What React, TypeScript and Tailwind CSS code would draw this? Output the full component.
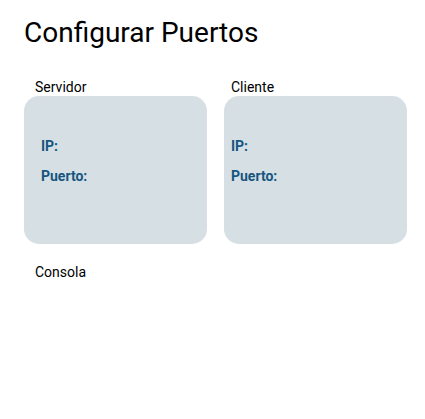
import React from "react";

function Card({ label, labelOffset, innerOffset }: { label: string; labelOffset: string; innerOffset: string }) {
  return (
    <div className="flex w-[183px] flex-col">
      <div className={`h-[19px] text-[14px] leading-[20px] text-black ${labelOffset}`}>{label}</div>
      <div className={`h-[148px] rounded-[15px] bg-[#d6dfe4] pt-[40px] ${innerOffset}`}>
        <div className="text-[14px] font-bold leading-[20px] text-[#155681]">IP:</div>
        <div className="mt-[10px] text-[14px] font-bold leading-[20px] text-[#155681]">Puerto:</div>
      </div>
    </div>
  );
}

export default function App() {
  return (
    <div className="min-h-[419px] bg-white pl-[24px] pt-[15px]" style={{ fontFamily: "Roboto, 'Noto Sans', sans-serif" }}>
      <h1 className="text-[28px] leading-[36px] text-black">Configurar Puertos</h1>
      <div className="mt-[26px] flex gap-[17px]">
        <Card label="Servidor" labelOffset="pl-[11px]" innerOffset="pl-[17px]" />
        <Card label="Cliente" labelOffset="pl-[7px]" innerOffset="pl-[7px]" />
      </div>
      <div className="mt-[18px] pl-[11px] text-[14px] leading-[20px] text-black">Consola</div>
    </div>
  );
}
